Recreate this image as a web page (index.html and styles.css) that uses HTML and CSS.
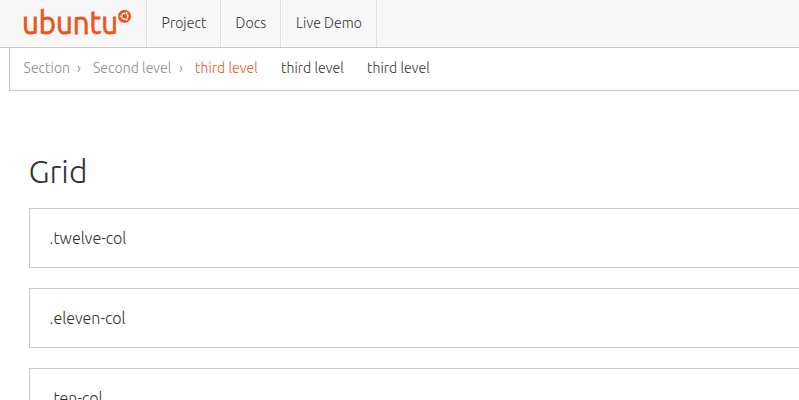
FILE: index.html
```html
<!DOCTYPE html>
<html lang="en">
<head>
<meta charset="utf-8">
<title>Grid</title>
<link rel="stylesheet" href="styles.css">
</head>
<body>
<header class="banner">
  <a class="logo">
    <svg width="146" height="47" viewBox="0 0 146 47">
      <text class="wordmark" x="22" y="33.500" textLength="96" lengthAdjust="spacingAndGlyphs">ubuntu</text>
      <circle cx="124.500" cy="16.300" r="6.500" fill="#e95420"/>
      <circle cx="124.800" cy="16.300" r="3" fill="none" stroke="#f7f7f7" stroke-width="1.400"/>
      <g fill="#f7f7f7" stroke="#e95420" stroke-width=".6">
        <circle cx="121" cy="16.300" r="1.300"/>
        <circle cx="126.600" cy="13" r="1.300"/>
        <circle cx="126.600" cy="19.600" r="1.300"/>
      </g>
    </svg>
  </a>
  <nav class="nav">
    <a class="nav-item project">Project</a>
    <a class="nav-item docs">Docs</a>
    <a class="nav-item demo">Live Demo</a>
  </nav>
</header>
<nav class="breadcrumb">
  <a class="crumb section">Section</a><span class="crumb arrow">›</span>
  <a class="crumb second">Second level</a><span class="crumb arrow">›</span>
  <a class="crumb third active">third level</a>
  <a class="crumb third">third level</a>
  <a class="crumb third">third level</a>
</nav>
<main class="content">
  <h1>Grid</h1>
  <div class="box">.twelve-col</div>
  <div class="box">.eleven-col</div>
  <div class="box">.ten-col</div>
</main>
</body>
</html>
```
FILE: styles.css
```css
* { box-sizing: border-box; }
body {
  margin: 0;
  height: 400px;
  overflow: hidden;
  background: #fff;
  color: #333;
  font-family: Ubuntu, "Noto Sans", "Open Sans", sans-serif;
  font-weight: 300;
}
.banner {
  display: flex;
  height: 48px;
  background: #f7f7f7;
  border-bottom: 1px solid #cacaca;
}
.logo { width: 146px; }
.logo svg { display: block; }
.wordmark {
  fill: #e95420;
  stroke: #e95420;
  stroke-width: 0.8px;
  font-size: 31.5px;
  font-weight: 400;
}
.nav { display: flex; border-left: 1px solid #dfdfdf; }
.nav-item {
  padding-left: 13.6px;
  border-left: 1px solid #fff;
  border-right: 1px solid #dfdfdf;
  font-size: 14px;
  line-height: 46px;
  letter-spacing: 0.06px;
  white-space: nowrap;
}
.project { width: 74px; }
.docs { width: 60px; }
.demo { width: 96px; padding-left: 14px; }
.breadcrumb {
  display: flex;
  height: 43px;
  margin-left: 9px;
  padding-left: 13.6px;
  border-left: 1px solid #cacaca;
  border-bottom: 1px solid #cacaca;
  font-size: 14px;
  line-height: 40px;
  letter-spacing: 0.06px;
  white-space: nowrap;
}
.crumb { flex: none; }
.section, .second, .arrow { color: #888; }
.section { width: 53.4px; }
.second { width: 86px; }
.arrow { width: 16px; }
.third { width: 86px; }
.active { color: #e95420; }
.content { padding: 58px 0 0 29px; }
h1 {
  margin: 0 0 15px -0.5px;
  font-size: 32px;
  line-height: 44px;
  font-weight: 300;
}
.box {
  height: 60px;
  margin-bottom: 20px;
  padding-left: 19.6px;
  border: 1px solid #cacaca;
  border-right: 0;
  font-size: 16px;
  line-height: 58px;
}
```
